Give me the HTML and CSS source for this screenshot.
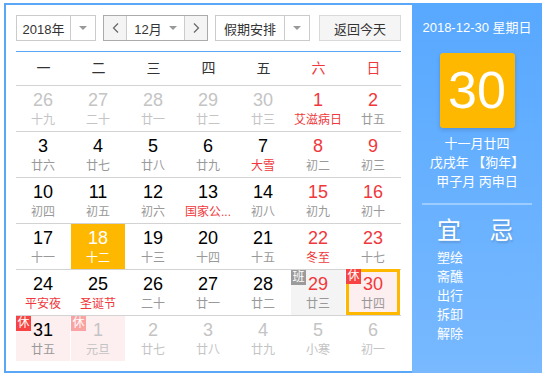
FILE: index.html
```html
<!DOCTYPE html>
<html lang="zh">
<head>
<meta charset="utf-8">
<link rel="stylesheet" href="styles.css">
</head>
<body>
<div class="cal">
  <div class="main">
    <div class="toolbar">
      <div class="sel sel-year"><span class="sel-text">2018年</span><span class="sel-arrow"><i class="tri"></i></span></div>
      <div class="month">
        <span class="nav"><svg width="7" height="10" viewBox="0 0 7 10"><polyline points="6,0.5 1.5,5 6,9.5" fill="none" stroke="#666" stroke-width="1.2"/></svg></span>
        <span class="month-sel"><span>12月</span><i class="tri"></i></span>
        <span class="nav nav-next"><svg width="7" height="10" viewBox="0 0 7 10"><polyline points="1,0.5 5.5,5 1,9.5" fill="none" stroke="#666" stroke-width="1.2"/></svg></span>
      </div>
      <div class="sel sel-holiday"><span class="sel-text">假期安排</span><span class="sel-arrow"><i class="tri"></i></span></div>
      <div class="today-btn">返回今天</div>
    </div>
    <div class="head">
      <span>一</span><span>二</span><span>三</span><span>四</span><span>五</span><span class="red">六</span><span class="red">日</span>
    </div>
    <div class="week">
      <div class="day other"><span class="num">26</span><span class="lunar">十九</span></div>
      <div class="day other"><span class="num">27</span><span class="lunar">二十</span></div>
      <div class="day other"><span class="num">28</span><span class="lunar">廿一</span></div>
      <div class="day other"><span class="num">29</span><span class="lunar">廿二</span></div>
      <div class="day other"><span class="num">30</span><span class="lunar">廿三</span></div>
      <div class="day weekend"><span class="num">1</span><span class="lunar fest">艾滋病日</span></div>
      <div class="day weekend"><span class="num">2</span><span class="lunar">廿五</span></div>
    </div>
    <div class="week">
      <div class="day"><span class="num">3</span><span class="lunar">廿六</span></div>
      <div class="day"><span class="num">4</span><span class="lunar">廿七</span></div>
      <div class="day"><span class="num">5</span><span class="lunar">廿八</span></div>
      <div class="day"><span class="num">6</span><span class="lunar">廿九</span></div>
      <div class="day"><span class="num">7</span><span class="lunar fest">大雪</span></div>
      <div class="day weekend"><span class="num">8</span><span class="lunar">初二</span></div>
      <div class="day weekend"><span class="num">9</span><span class="lunar">初三</span></div>
    </div>
    <div class="week">
      <div class="day"><span class="num">10</span><span class="lunar">初四</span></div>
      <div class="day"><span class="num">11</span><span class="lunar">初五</span></div>
      <div class="day"><span class="num">12</span><span class="lunar">初六</span></div>
      <div class="day"><span class="num">13</span><span class="lunar fest">国家公...</span></div>
      <div class="day"><span class="num">14</span><span class="lunar">初八</span></div>
      <div class="day weekend"><span class="num">15</span><span class="lunar">初九</span></div>
      <div class="day weekend"><span class="num">16</span><span class="lunar">初十</span></div>
    </div>
    <div class="week">
      <div class="day"><span class="num">17</span><span class="lunar">十一</span></div>
      <div class="day selected"><span class="num">18</span><span class="lunar">十二</span></div>
      <div class="day"><span class="num">19</span><span class="lunar">十三</span></div>
      <div class="day"><span class="num">20</span><span class="lunar">十四</span></div>
      <div class="day"><span class="num">21</span><span class="lunar">十五</span></div>
      <div class="day weekend"><span class="num">22</span><span class="lunar fest">冬至</span></div>
      <div class="day weekend"><span class="num">23</span><span class="lunar">十七</span></div>
    </div>
    <div class="week">
      <div class="day"><span class="num">24</span><span class="lunar fest">平安夜</span></div>
      <div class="day"><span class="num">25</span><span class="lunar fest">圣诞节</span></div>
      <div class="day"><span class="num">26</span><span class="lunar">二十</span></div>
      <div class="day"><span class="num">27</span><span class="lunar">廿一</span></div>
      <div class="day"><span class="num">28</span><span class="lunar">廿二</span></div>
      <div class="day weekend work"><i class="badge badge-work">班</i><span class="num">29</span><span class="lunar">廿三</span></div>
      <div class="day weekend rest today"><i class="badge">休</i><span class="num">30</span><span class="lunar">廿四</span></div>
    </div>
    <div class="week">
      <div class="day rest"><i class="badge">休</i><span class="num">31</span><span class="lunar">廿五</span></div>
      <div class="day other rest"><i class="badge badge-faded">休</i><span class="num">1</span><span class="lunar">元旦</span></div>
      <div class="day other"><span class="num">2</span><span class="lunar">廿七</span></div>
      <div class="day other"><span class="num">3</span><span class="lunar">廿八</span></div>
      <div class="day other"><span class="num">4</span><span class="lunar">廿九</span></div>
      <div class="day other"><span class="num">5</span><span class="lunar">小寒</span></div>
      <div class="day other"><span class="num">6</span><span class="lunar">初一</span></div>
    </div>
  </div>
  <div class="side">
    <div class="side-date">2018-12-30 星期日</div>
    <div class="big">30</div>
    <div class="lunar-info">
      <div>十一月廿四</div>
      <div>戊戌年 【狗年】</div>
      <div>甲子月 丙申日</div>
    </div>
    <div class="divider"></div>
    <div class="yj">
      <div class="yj-col">
        <div class="yj-title">宜</div>
        <div class="yj-list">
          <div>塑绘</div><div>斋醮</div><div>出行</div><div>拆卸</div><div>解除</div>
        </div>
      </div>
      <div class="yj-col">
        <div class="yj-title">忌</div>
      </div>
    </div>
  </div>
</div>
</body>
</html>
```
FILE: styles.css
```css
* { box-sizing: border-box; margin: 0; padding: 0; }
body {
  margin: 0;
  background: #fff;
  font-family: "Liberation Sans", "Noto Sans CJK SC", sans-serif;
  color: #333;
}
.cal {
  display: flex;
  margin: 3px 0 0 4px;
  width: 538px;
  height: 370px;
}
.main {
  width: 408px;
  height: 370px;
  border: 2px solid #5ba7f7;
  border-right: 0;
  padding: 10px 11px 0 10px;
}
.toolbar {
  display: flex;
  height: 37px;
  padding-bottom: 10px;
  border-bottom: 1px solid #5ba7f7;
}
.sel {
  display: flex;
  height: 26px;
  border: 1px solid #cbcbcb;
  background: #fff;
  font-size: 13px;
  color: #333;
}
.sel-year { width: 80px; }
.sel-holiday { width: 95px; margin-left: 7px; }
.sel-text {
  flex: 1;
  display: flex;
  align-items: center;
  justify-content: center;
  border-right: 1px solid #cbcbcb;
}
.sel-arrow {
  width: 24px;
  display: flex;
  align-items: center;
  justify-content: center;
}
.tri {
  display: block;
  width: 0;
  height: 0;
  border-left: 4px solid transparent;
  border-right: 4px solid transparent;
  border-top: 4px solid #999;
}
.month {
  display: flex;
  width: 105px;
  height: 26px;
  margin-left: 7px;
  border: 1px solid #ababab;
  font-size: 13px;
}
.nav {
  width: 23px;
  background: #f4f4f4;
  border-right: 1px solid #cbcbcb;
  display: flex;
  align-items: center;
  justify-content: center;
}
.nav-next {
  border-right: 0;
  border-left: 1px solid #cbcbcb;
}
.month-sel {
  flex: 1;
  display: flex;
  align-items: center;
  justify-content: center;
  gap: 7px;
  background: #fff;
}
.today-btn {
  width: 82px;
  height: 26px;
  margin-left: 9px;
  border: 1px solid #d9d9d9;
  background: #f5f5f5;
  font-size: 13px;
  display: flex;
  align-items: center;
  justify-content: center;
}
.head {
  display: grid;
  grid-template-columns: repeat(7, 55px);
  height: 34px;
  border-bottom: 1px solid #d3d3d3;
  font-size: 14px;
  line-height: 33px;
  text-align: center;
  color: #333;
}
.red { color: #f0383c; }
.week {
  display: grid;
  grid-template-columns: repeat(7, 55px);
  height: 46px;
  border-bottom: 1px solid #d3d3d3;
}
.week:last-child { border-bottom: 0; }
.day {
  position: relative;
  width: 54px;
  height: 45px;
  padding-top: 4px;
  text-align: center;
}
.num {
  display: block;
  font-size: 18px;
  line-height: 21px;
  color: #000;
}
.lunar {
  display: block;
  font-size: 12px;
  line-height: 18px;
  color: #999;
  white-space: nowrap;
}
.weekend .num { color: #f0383c; }
.lunar.fest { color: #f0383c; }
.other .num, .other .lunar { color: #c4c4c4; }
.selected { background: #ffb800; }
.selected .num, .selected .lunar { color: #fff; }
.rest { background: #fdefef; }
.work { background: #f4f4f4; }
.today::after {
  content: "";
  position: absolute;
  left: 0;
  right: 0;
  top: -1px;
  bottom: 0;
  border: 3px solid #ffb800;
}
.badge {
  position: absolute;
  left: 0;
  top: 0;
  z-index: 1;
  width: 15px;
  height: 15px;
  background: #f74343;
  color: #fff;
  font-style: normal;
  font-size: 12px;
  line-height: 15px;
  text-align: center;
}
.today .badge { top: -1px; }
.badge-work { background: #9b9b9b; }
.badge-faded { background: #f9a3a3; }
.side {
  width: 130px;
  height: 370px;
  background: linear-gradient(#57a8ff, #78b9ff);
  color: #fff;
  text-align: center;
  padding-top: 16px;
}
.side-date {
  font-size: 13px;
  line-height: 18px;
}
.big {
  width: 75px;
  height: 75px;
  margin: 16px auto 0;
  background: #ffb800;
  border-radius: 3px;
  box-shadow: 0 2px 4px rgba(0, 0, 0, 0.15);
  font-size: 52px;
  line-height: 75px;
  color: #fff;
}
.lunar-info {
  margin-top: 6px;
  font-size: 13px;
  line-height: 19px;
}
.divider {
  height: 2px;
  margin: 12px 10px 0;
  background: rgba(255, 255, 255, 0.35);
}
.yj {
  display: flex;
  margin-top: 12px;
  padding-left: 25px;
  text-align: left;
}
.yj-col { width: 56px; }
.yj-title {
  font-size: 24px;
  line-height: 28px;
  text-shadow: 1px 2px 2px rgba(0, 0, 0, 0.15);
}
.yj-list {
  margin-top: 3px;
  font-size: 13px;
  line-height: 19px;
}
```
